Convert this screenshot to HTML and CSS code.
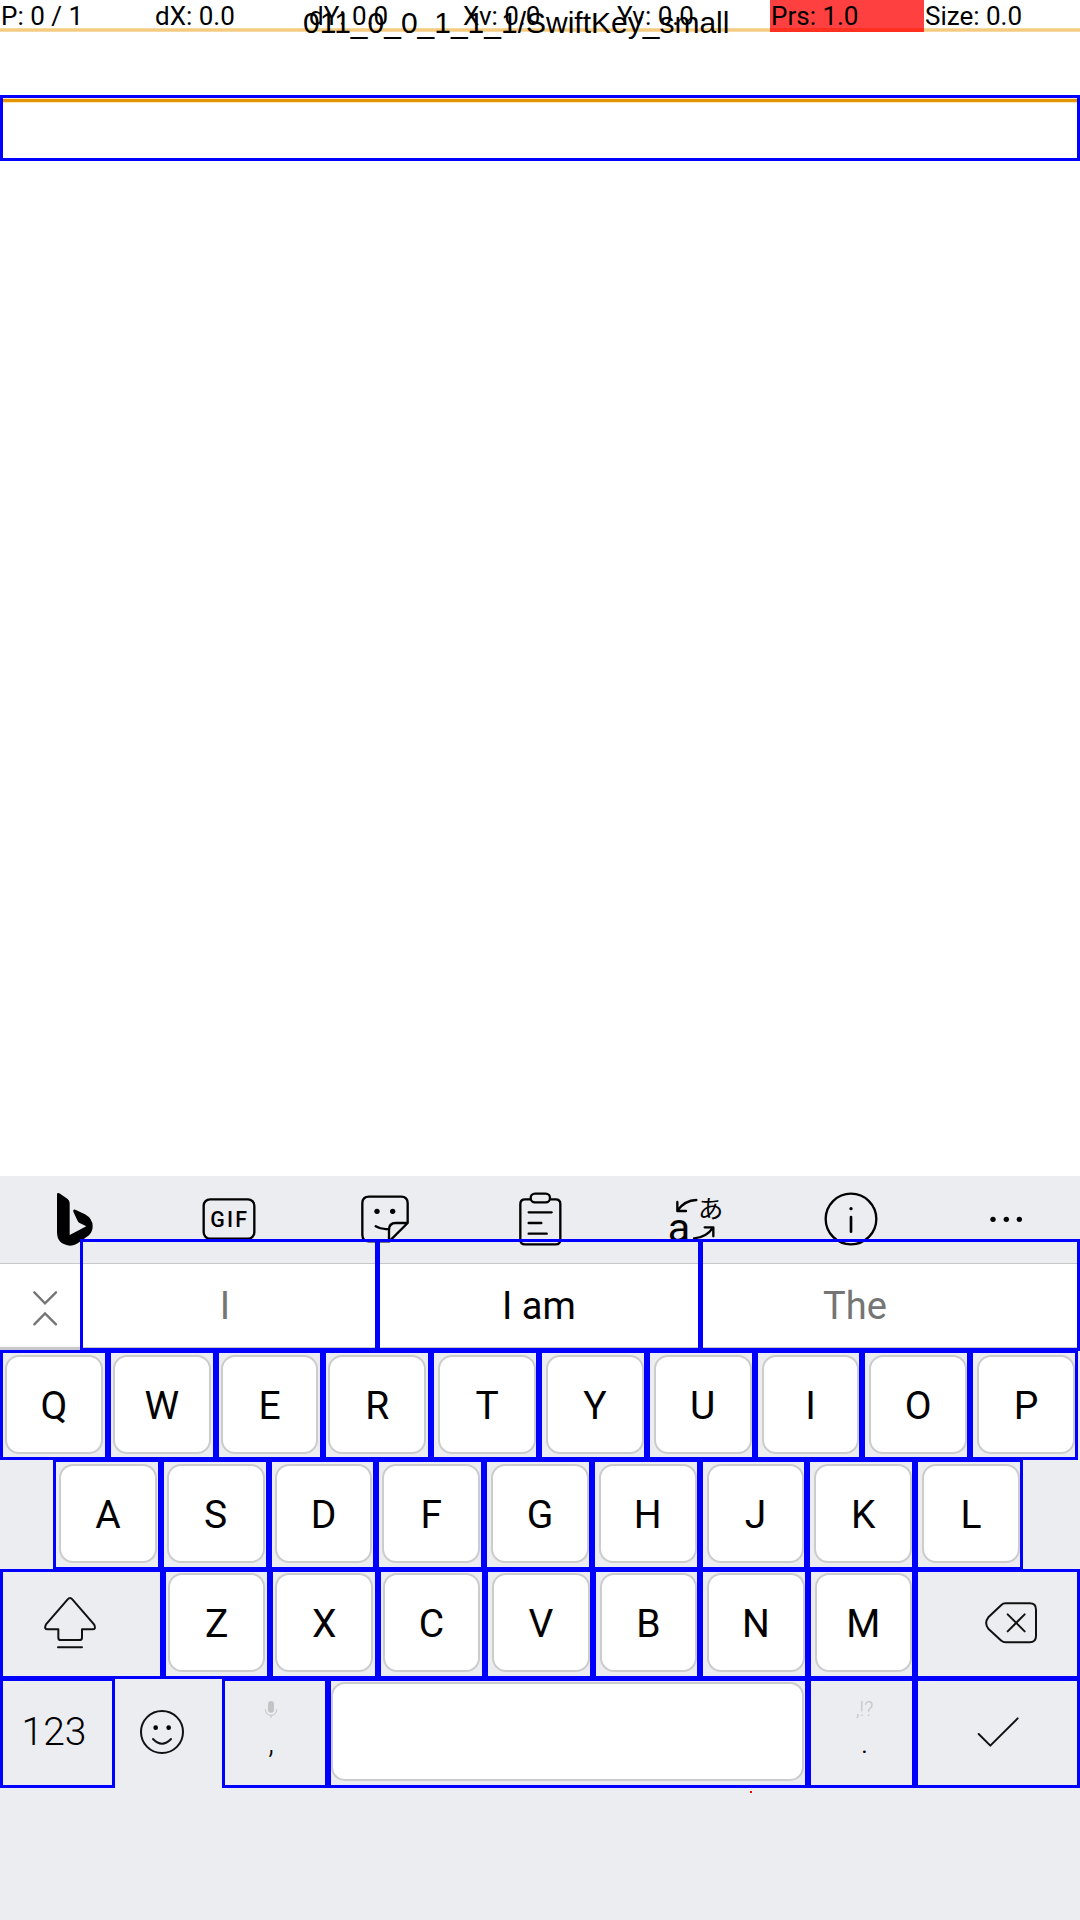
FILE: index.html
```html
<!DOCTYPE html>
<html lang="en">
<head>
<meta charset="utf-8">
<meta name="viewport" content="width=device-width, initial-scale=1">
<title>SwiftKey_small</title>
<link rel="stylesheet" href="styles.css">
</head>
<body>
<header class="status">
  <div class="pointer">
    <span>P: 0 / 1</span><span>dX: 0.0</span><span>dY: 0.0</span><span>Xv: 0.0</span><span>Yv: 0.0</span><span class="pressed">Prs: 1.0</span><span>Size: 0.0</span>
  </div>
  <h1 class="title">011_0_0_1_1_1/SwiftKey_small</h1>
</header>
<main class="page">
  <input class="entry" type="text" aria-label="Text entry">
</main>
<section class="keyboard" aria-label="Keyboard">
  <div class="toolbar">
    <button class="tool" aria-label="Bing"><svg class="icon" viewBox="141 64 168 168"><path class="solid" d="M174 74Q174 68 181 71L205 87Q212 92 212 100V196L262 170L242 160Q237 158 235 152L223 126Q221 118 229 120L258 134Q281 147 281 170Q281 186 270 197L236 221Q226 228 214 228Q174 225 174 188Z"/></svg></button>
    <button class="tool" aria-label="GIF"><svg class="icon" viewBox="605 64 168 168"><rect x="613" y="89" width="152" height="118" rx="19"/><text class="gif" x="633 683 708" y="171">GIF</text></svg></button>
    <button class="tool" aria-label="Stickers"><svg class="icon" viewBox="-10 64 168 168"><path d="M88 215H26Q6 215 6 195V101Q6 81 26 81H122Q142 81 142 101V160L92 210Q90 215 86 215V180Q86 160 106 160H140M46 170Q62 180 84 178"/><circle class="solid" cx="50" cy="125" r="8"/><circle class="solid" cx="97" cy="125" r="8"/></svg></button>
    <button class="tool" aria-label="Clipboard"><svg class="icon" viewBox="457 64 168 168"><path d="M512 89H496Q482 89 482 103V210Q482 224 496 224H588Q602 224 602 210V103Q602 89 588 89H571M507 128H576M507 160H545M507 192H561"/><rect x="513" y="72" width="58" height="26" rx="13"/></svg></button>
    <button class="tool" aria-label="Translate"><svg class="icon" viewBox="922 64 168 168"><path d="M1010 91Q975 92 953 123M953 97V124H979M1003 206Q1040 204 1060 174M1035 173H1061V200"/><text class="latin" x="924" y="216">a</text><text class="kana" x="1015" y="146">あ</text></svg></button>
    <button class="tool" aria-label="Info"><svg class="icon" viewBox="370 64 168 168"><circle cx="454" cy="148" r="76"/><circle class="solid" cx="454" cy="117" r="5"/><path class="heavy" d="M454 142V186"/></svg></button>
    <button class="tool" aria-label="More"><svg class="icon" viewBox="835 64 168 168"><circle class="solid" cx="880" cy="149" r="8"/><circle class="solid" cx="920" cy="149" r="8"/><circle class="solid" cx="959" cy="149" r="8"/></svg></button>
  </div>
  <div class="suggestions">
    <button class="toggle" aria-label="Collapse"><svg class="chevrons" viewBox="94 351 84 114"><path d="M104 361L136 394L169 361M104 457L136 424L169 457"/></svg></button>
    <button class="suggestion first">I</button>
    <button class="suggestion best">I am</button>
    <button class="suggestion last">The</button>
  </div>
  <div class="row row-top">
    <button class="key"><span class="cap">Q</span></button>
    <button class="key"><span class="cap">W</span></button>
    <button class="key"><span class="cap">E</span></button>
    <button class="key"><span class="cap">R</span></button>
    <button class="key"><span class="cap">T</span></button>
    <button class="key"><span class="cap">Y</span></button>
    <button class="key"><span class="cap">U</span></button>
    <button class="key"><span class="cap">I</span></button>
    <button class="key"><span class="cap">O</span></button>
    <button class="key"><span class="cap">P</span></button>
  </div>
  <div class="row row-home">
    <button class="key"><span class="cap">A</span></button>
    <button class="key"><span class="cap">S</span></button>
    <button class="key"><span class="cap">D</span></button>
    <button class="key"><span class="cap">F</span></button>
    <button class="key"><span class="cap">G</span></button>
    <button class="key"><span class="cap">H</span></button>
    <button class="key"><span class="cap">J</span></button>
    <button class="key"><span class="cap">K</span></button>
    <button class="key"><span class="cap">L</span></button>
  </div>
  <div class="row row-lower">
    <button class="key plain shift" aria-label="Shift"><svg class="icon thin" viewBox="126 102 168 168"><path d="M203 115Q210 107 217 115L282 190Q290 205 277 205H246V230Q246 237 238 237H182Q175 237 175 230V205H143Q131 205 138 190ZM174 259H246"/></svg></button>
    <button class="key"><span class="cap">Z</span></button>
    <button class="key"><span class="cap">X</span></button>
    <button class="key"><span class="cap">C</span></button>
    <button class="key"><span class="cap">V</span></button>
    <button class="key"><span class="cap">B</span></button>
    <button class="key"><span class="cap">N</span></button>
    <button class="key"><span class="cap">M</span></button>
    <button class="key plain delete" aria-label="Delete"><svg class="icon thin" viewBox="906 102 168 168"><path d="M974 127H1046Q1065 127 1065 146V225Q1065 244 1046 244H974Q966 244 961 239L922 203Q909 186 922 169L961 132Q966 127 974 127ZM980 160L1031 211M1031 160L980 211"/></svg></button>
  </div>
  <div class="row row-bottom">
    <button class="key plain numbers">123</button>
    <button class="key plain emoji" aria-label="Emoji"><svg class="icon thin" viewBox="402 429 168 168"><circle cx="486" cy="513" r="63"/><circle class="solid" cx="467" cy="500" r="7"/><circle class="solid" cx="506" cy="500" r="7"/><path d="M459 534Q486 562 513 534"/></svg></button>
    <button class="key punct comma"><span class="hint"><svg class="mic" viewBox="780 414 60 66"><rect x="801" y="423" width="18" height="35" rx="9"/><path d="M793 448Q794 466 810 466Q826 466 827 448M810 466V474"/></svg></span><span>,</span></button>
    <button class="key space" aria-label="Space"><span class="cap"></span></button>
    <button class="key punct period"><span class="hint">,!?</span><span>.</span></button>
    <button class="key plain" aria-label="Enter"><svg class="icon thin" viewBox="871 432 168 168"><path d="M897 522L932 557L1014 475"/></svg></button>
    <i class="touch"></i>
  </div>
</section>
</body>
</html>
```
FILE: styles.css
```css
* {
  box-sizing: border-box;
}

body {
  display: flex;
  flex-direction: column;
  min-height: 100vh;
  margin: 0;
  background: #fff;
  color: #000;
  font-family: Roboto, sans-serif;
}

button {
  margin: 0;
  padding: 0;
  border: 0;
  border-radius: 0;
  background: none;
  color: inherit;
  font: inherit;
}

/* Pointer readout with the window title over it */
.status {
  position: relative;
}

.pointer {
  display: grid;
  grid-template-columns: repeat(7, 1fr);
  height: 32px;
  padding-right: 2px;
  background: linear-gradient(#f9e6c4, #f4cb80 1px, #f4cb80 3px, #f9e6c4) bottom / 100% 4px no-repeat;
  font-size: 26px;
  line-height: 32px;
}

.pointer span {
  padding-left: 1px;
  white-space: nowrap;
}

.pointer .pressed {
  background: linear-gradient(#ff4040 28px, #ff3020 28px);
}

.title {
  position: absolute;
  top: 5px;
  left: 303px;
  margin: 0;
  font: 30px/36px "Liberation Sans", sans-serif;
  white-space: nowrap;
}

.page {
  flex: 1;
  padding-top: 63px;
}

.entry {
  display: block;
  width: 100%;
  height: 66px;
  padding: 0 12px;
  border: 3px solid #00f;
  background: linear-gradient(#fae6c0 1px, #e59400 1px, #e59400 4px, #fae6c0 4px) top / 100% 5px no-repeat;
  font: 32px Roboto, sans-serif;
  outline: 0;
}

.keyboard {
  padding-bottom: 132px;
  background: #ecedf1;
}

.toolbar {
  display: flex;
  align-items: center;
  justify-content: space-between;
  height: 88px;
  padding: 0 46px 1px;
  border-bottom: 1px solid #c8c8c8;
}

.icon {
  display: block;
  width: 56px;
  height: 56px;
  overflow: visible;
  fill: none;
  stroke: #000;
  stroke-width: 7;
  stroke-linecap: round;
  stroke-linejoin: round;
}

.thin {
  stroke: #111;
  stroke-width: 6;
}

.icon .solid,
.icon text {
  fill: #000;
  stroke: none;
}

.icon .heavy {
  stroke-width: 8;
}

.gif {
  font: 500 64px Roboto, sans-serif;
}

.latin {
  font: 124px Roboto, sans-serif;
}

.kana {
  font: 400 76px "Noto Sans CJK JP", sans-serif;
}

/* Suggestion outlines reach up over the toolbar */
.suggestions {
  position: relative;
  z-index: 1;
  display: grid;
  grid-template-columns: 80px 297fr 323fr 380fr;
  height: 86px;
  border-bottom: 3px solid #c8c8c8;
  background: #fff;
}

.toggle {
  display: flex;
  align-items: center;
  justify-content: center;
  padding-left: 10px;
}

.chevrons {
  width: 28px;
  height: 38px;
  fill: none;
  stroke: #757575;
  stroke-width: 7;
  stroke-linecap: round;
}

.suggestion {
  height: 112px;
  margin: -25px -1px 0 0;
  padding-top: 22px;
  border: 3px solid #00f;
  color: #757575;
  font-size: 38px;
}

.first {
  padding-right: 8px;
}

.best {
  color: #000;
}

.last {
  margin-right: 0;
  padding-right: 70px;
}

.row {
  position: relative;
  z-index: 2;
  display: grid;
  grid-auto-rows: 110px;
}

.row + .row {
  margin-top: -1px;
}

.row-top {
  grid-template-columns: repeat(10, 1fr);
  padding-right: 2px;
}

.row-home {
  grid-template-columns: repeat(9, 1fr);
  grid-auto-rows: 111px;
  padding: 0 57px 0 53px;
}

.row-lower {
  grid-template-columns: 163px repeat(7, 1fr) 165px;
}

.row-bottom {
  grid-template-columns: 115px 107px 106px 1fr 107px 165px;
}

.key {
  display: flex;
  padding: 2px 2px 3px;
  border: 3px solid #00f;
  font-size: 39px;
}

.row-home .key {
  padding: 2px 1px 4px 3px;
}

.row-lower .key,
.row-bottom .key {
  padding: 1px 2px 4px;
}

/* Caps sit on a slightly wider pitch than the outlines */
.row-top .key:nth-child(n+5),
.row-home .key:nth-child(n+5) {
  padding-right: 0;
  padding-left: 4px;
}

.row-lower .key:nth-child(n+5) {
  padding-right: 0;
  padding-left: 4px;
}

.cap {
  display: flex;
  flex: 1;
  align-items: center;
  align-self: stretch;
  justify-content: center;
  padding-top: 2px;
  border: 2px solid #ccc;
  border-radius: 14px;
  background: #fff;
}

.row-bottom .space {
  padding-right: 1px;
  padding-left: 0;
}

.plain {
  align-items: center;
  justify-content: center;
}

.row-lower .shift {
  padding-right: 26px;
}

.row-lower .delete:nth-child(n+5) {
  padding-left: 26px;
}

.row-bottom .numbers {
  padding-right: 9px;
  font-size: 39px;
  font-weight: 300;
}

.row-bottom .emoji {
  padding-right: 15px;
  border-color: transparent;
}

.row-bottom .punct {
  flex-direction: column;
  align-items: center;
  padding-top: 17px;
  font-size: 32px;
  font-weight: 300;
  line-height: 44px;
}

.row-bottom .comma {
  padding-right: 10px;
}

.row-bottom .period {
  padding-left: 8px;
}

.hint {
  height: 22px;
  color: #c4c4c4;
  font-size: 20px;
  line-height: 22px;
}

.mic {
  display: block;
  width: 20px;
  height: 22px;
  fill: #c4c4c4;
}

.mic path {
  fill: none;
  stroke: #c4c4c4;
  stroke-width: 3;
}

/* Last touch position */
.touch {
  position: absolute;
  top: 113px;
  left: 750px;
  width: 2px;
  height: 2px;
  background: #f00;
}
```
